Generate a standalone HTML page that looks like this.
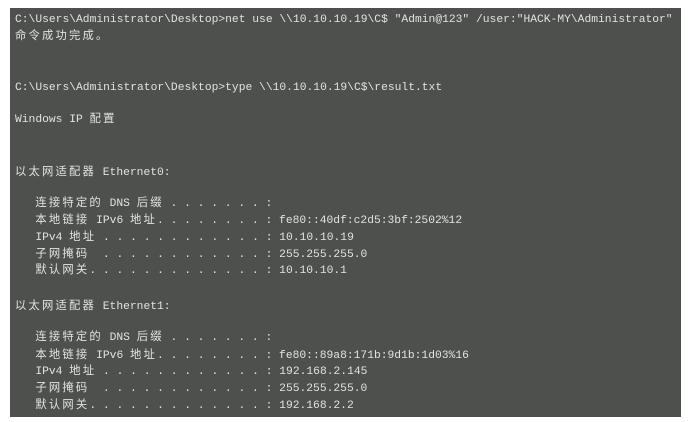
<!DOCTYPE html>
<html><head><meta charset="utf-8"><style>
html,body{margin:0;padding:0;width:690px;height:422px;background:#fff;overflow:hidden}
#t{position:absolute;left:10px;top:8px;width:671px;height:409px;background:#4e504d}
.l{position:absolute;left:5px;white-space:pre;font-family:"Liberation Mono","Noto Sans CJK SC",monospace;font-size:11.3px;line-height:16px;color:#e2e3e0}
.c{letter-spacing:2.2px}
</style></head><body>
<div id="t">
<div class="l" style="top:4px">C:\Users\Administrator\Desktop&gt;net use \\10.10.10.19\C$ "Admin@123" /user:"HACK-MY\Administrator"</div>
<div class="l" style="top:21px"><span class="c">命令成功完成。</span></div>
<div class="l" style="top:72px">C:\Users\Administrator\Desktop&gt;type \\10.10.10.19\C$\result.txt</div>
<div class="l" style="top:104px">Windows IP <span class="c">配置</span></div>
<div class="l" style="top:157px"><span class="c">以太网适配器</span> Ethernet0:</div>
<div class="l" style="top:188px">   <span class="c">连接特定的</span> DNS <span class="c">后缀</span> . . . . . . . :</div>
<div class="l" style="top:205px">   <span class="c">本地链接</span> IPv6 <span class="c">地址</span>. . . . . . . . : fe80::40df:c2d5:3bf:2502%12</div>
<div class="l" style="top:222px">   IPv4 <span class="c">地址</span> . . . . . . . . . . . . : 10.10.10.19</div>
<div class="l" style="top:239px">   <span class="c">子网掩码</span>  . . . . . . . . . . . . : 255.255.255.0</div>
<div class="l" style="top:255px">   <span class="c">默认网关</span>. . . . . . . . . . . . . : 10.10.10.1</div>
<div class="l" style="top:291px"><span class="c">以太网适配器</span> Ethernet1:</div>
<div class="l" style="top:322px">   <span class="c">连接特定的</span> DNS <span class="c">后缀</span> . . . . . . . :</div>
<div class="l" style="top:340px">   <span class="c">本地链接</span> IPv6 <span class="c">地址</span>. . . . . . . . : fe80::89a8:171b:9d1b:1d03%16</div>
<div class="l" style="top:356px">   IPv4 <span class="c">地址</span> . . . . . . . . . . . . : 192.168.2.145</div>
<div class="l" style="top:373px">   <span class="c">子网掩码</span>  . . . . . . . . . . . . : 255.255.255.0</div>
<div class="l" style="top:390px">   <span class="c">默认网关</span>. . . . . . . . . . . . . : 192.168.2.2</div>
</div>
</body></html>
